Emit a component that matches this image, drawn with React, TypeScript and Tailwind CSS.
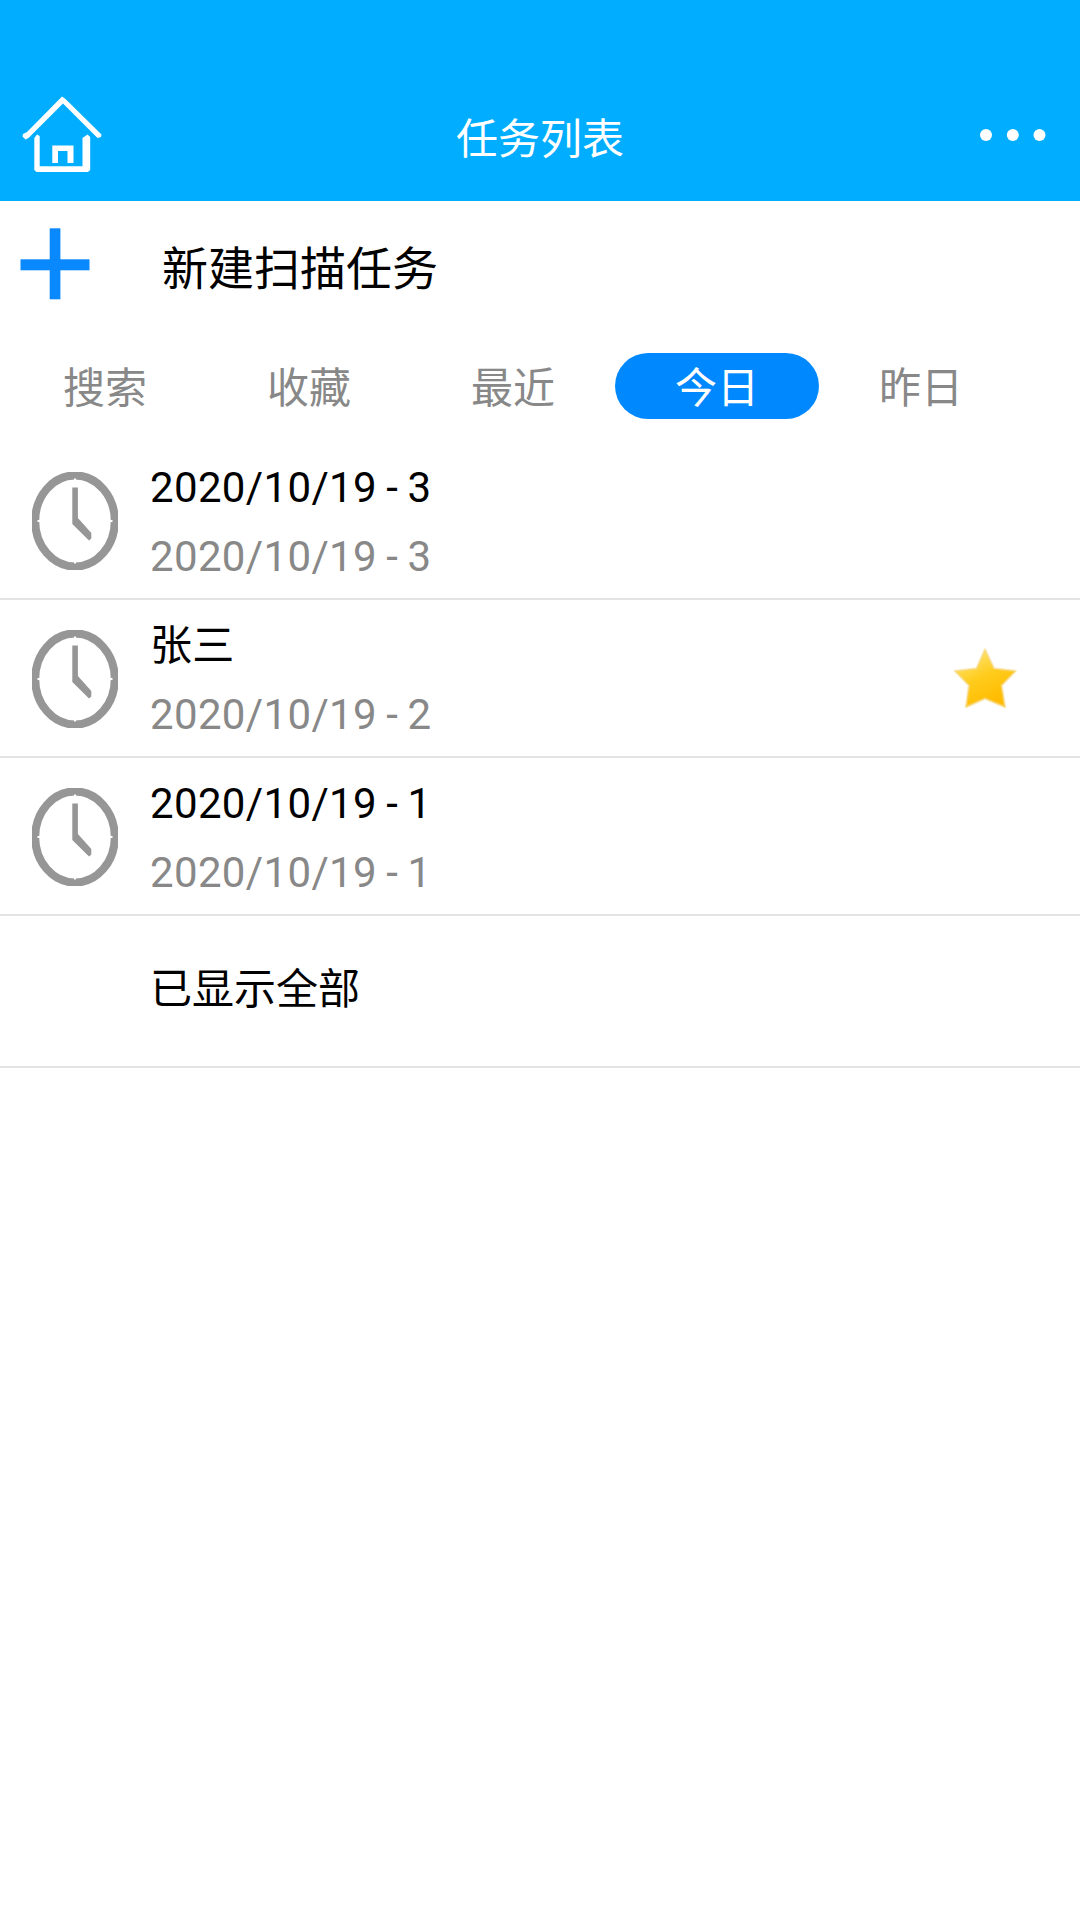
type Task = {
  title: string;
  subtitle: string;
  starred?: boolean;
};

const tabs = ["搜索", "收藏", "最近", "今日", "昨日"];
const activeTab = "今日";

const tasks: Task[] = [
  { title: "2020/10/19 - 3", subtitle: "2020/10/19 - 3" },
  { title: "张三", subtitle: "2020/10/19 - 2", starred: true },
  { title: "2020/10/19 - 1", subtitle: "2020/10/19 - 1" },
];

function HomeIcon() {
  return (
    <svg className="max-w-none shrink-0" width="82" height="78" viewBox="0 0 82 78" fill="#fff">
      {/* Roof */}
      <path d="M40 0.5 L43.5 3 L79.5 38.5 L79 41 L75.5 42 L41 7.5 L6.5 42 L3.5 43.5 L0.5 40.5 L1 38 L5 36 Z" />
      {/* Walls */}
      <path d="M12.3 42 L15 38.5 L17.7 40 V70.3 H60.5 V42 L65.5 38.5 L68.2 41 V74 L66 76 H14.5 L12.3 74 Z" />
      {/* Door */}
      <path d="M30.3 49.5 H51.5 V67 H45.5 V55 H36 V67 H30.3 Z" />
    </svg>
  );
}

function DotsIcon() {
  return (
    <svg width="66" height="12" viewBox="0 0 66 12" fill="#fff">
      <circle cx="6" cy="6" r="6" />
      <circle cx="32.8" cy="6" r="6" />
      <circle cx="59.5" cy="6" r="6" />
    </svg>
  );
}

function PlusIcon() {
  return (
    <svg width="70" height="72" viewBox="0 0 70 72" fill="#0a89ff">
      <rect x="29.7" y="0.3" width="10.7" height="71" />
      <rect x="0.5" y="31.3" width="69" height="11" />
    </svg>
  );
}

function ClockIcon() {
  return (
    <svg width="86" height="98" viewBox="0 0 86 98">
      {/* The rim runs slightly past the box, which flattens it on each side */}
      <ellipse cx="43" cy="49" rx="39.8" ry="45.6" fill="none" stroke="#969696" strokeWidth="8" />
      <path
        d="M43 6.5 V9 M43 89 V91.5 M5.5 49 H8 M78 49 H80.5"
        stroke="#fff"
        strokeWidth="2"
      />
      <path fill="#969696" d="M40.3 15.5 H45.9 V46 L59.3 61 V66.5 L57 68.5 L40.3 52 Z" />
    </svg>
  );
}

function StarIcon() {
  return (
    <svg width="66" height="64" viewBox="0 0 66 64">
      <defs>
        <linearGradient id="star" x1="0.2" y1="0.1" x2="0.6" y2="0.9">
          <stop offset="0" stopColor="#ffe36e" />
          <stop offset="0.5" stopColor="#ffcc1c" />
          <stop offset="1" stopColor="#ffbc02" />
        </linearGradient>
      </defs>
      <path
        d="M32 2.5 L41 21.5 L62.5 24 L48.5 38.5 L52 60 L32 51.5 L13 60 L16 38.5 L2 24 L23.5 21.5 Z"
        fill="url(#star)"
        stroke="#f5d67b"
        strokeOpacity="0.55"
        strokeWidth="2.5"
        strokeLinejoin="round"
      />
    </svg>
  );
}

function TaskRow({ task }: { task: Task }) {
  return (
    <li className="flex h-[158px] items-center border-b-2 border-[#e3e3e3] pl-8 pr-[61px] pt-0.5">
      <ClockIcon />
      <div className="ml-8 flex-1 pt-0.5 tracking-[0.35px] [word-spacing:-1.5px]">
        <p className="h-[69px] leading-[69px] text-black">{task.title}</p>
        <p className="h-[69px] leading-[69px] text-[#888]">{task.subtitle}</p>
      </div>
      {task.starred && <StarIcon />}
    </li>
  );
}

export default function App() {
  return (
    <div className="flex min-h-[1920px] w-[1080px] flex-col bg-white font-[Roboto,'Noto_Sans_CJK_SC',sans-serif] text-[42px]">
      <header className="flex h-[201px] items-center justify-between bg-[#00adff] pl-[22px] pr-[34px] pt-[69px]">
        <div className="flex w-[78px]">
          <HomeIcon />
        </div>
        <h1 className="pt-2 text-white">任务列表</h1>
        <DotsIcon />
      </header>

      <button className="flex h-[126px] items-center pl-5 text-[46px] text-black">
        <PlusIcon />
        <span className="ml-[72px] pt-2.5">新建扫描任务</span>
      </button>

      <nav className="flex h-[115px] items-center pl-[3px] pt-0.5">
        {tabs.map((tab) => (
          <button
            key={tab}
            className={
              tab === activeTab
                ? "flex h-[66px] w-[204px] items-center justify-center rounded-full bg-[#08f] pt-1.5 text-white"
                : "flex h-[66px] w-[204px] items-center justify-center pt-1.5 text-[#888]"
            }
          >
            {tab}
          </button>
        ))}
      </nav>

      <ul>
        {tasks.map((task) => (
          <TaskRow key={task.subtitle} task={task} />
        ))}
        <li className="flex h-[152px] items-center border-b-2 border-[#e3e3e3] pb-1 pl-[150px] text-black">
          已显示全部
        </li>
      </ul>
    </div>
  );
}
